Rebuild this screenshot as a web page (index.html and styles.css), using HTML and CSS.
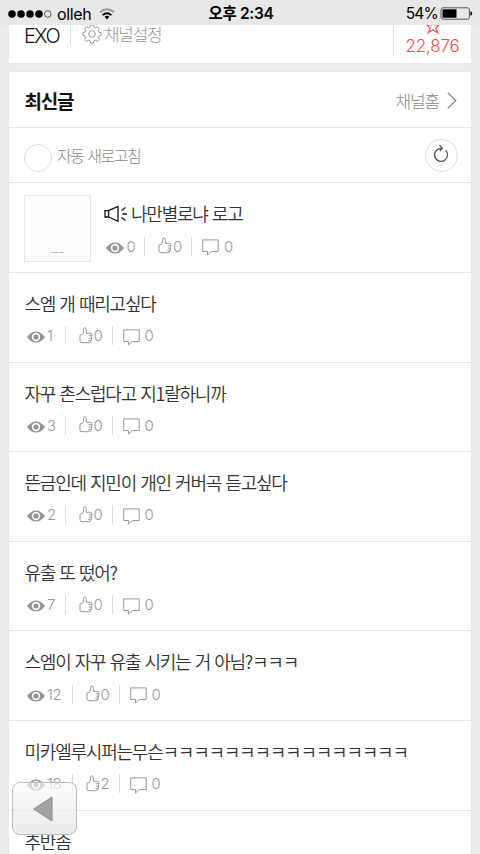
FILE: index.html
```html
<!DOCTYPE html>
<html lang="ko">
<head>
<meta charset="utf-8">
<title>EXO 채널</title>
<link rel="stylesheet" href="styles.css">
</head>
<body>
<svg class="defs" aria-hidden="true">
  <symbol id="eye" viewBox="0 0 18 12"><path fill="#959595" fill-rule="evenodd" d="M0 6Q4 .4 9 .4T18 6Q14 11.600 9 11.600T0 6ZM9 1.800A4.200 4.200 0 1 0 9 10.200 4.200 4.200 0 1 0 9 1.800Z"/><circle cx="9" cy="6" r="2.600" fill="#959595"/></symbol>
  <symbol id="thumb" viewBox="0 0 14 17"><path fill="none" stroke="#999" stroke-linejoin="round" d="M1 8.200L3.500 7.200Q5 5.500 4.600 2.500Q4.400.7 5.600.7Q7.200.7 7.400 3.500L7.200 6.300H11.700Q13.200 6.500 13 8L12.200 13.700Q11.800 15.700 9.800 15.700H3Q1 15.700 1 14ZM9.800 8.700H12.700M9.800 11.200H12.400M9.300 13.700H12"/></symbol>
  <symbol id="bubble" viewBox="0 0 17 17"><path fill="none" stroke="#999" d="M.7.9H16.200V12.500H9.500L5.500 15.900V12.500H.7Z"/></symbol>
</svg>

<header class="status">
  <div class="carrier">
    <svg width="44" height="10" viewBox="0 0 44 10"><circle cx="4" cy="5" r="3.800"/><circle cx="13" cy="5" r="3.800"/><circle cx="22" cy="5" r="3.800"/><circle cx="31" cy="5" r="3.800"/><circle cx="39.800" cy="5" r="3.300" fill="none" stroke="#333" stroke-width=".8"/></svg>
    <span>olleh</span>
    <svg class="wifi" width="16" height="12" viewBox="0 0 16 12" fill="none" stroke-width="1.900"><path stroke="#999" d="M1 4.300Q8-1.800 15 4.300"/><path stroke="#000" d="M3.600 7.100Q8 3.300 12.400 7.100"/><path fill="#000" d="M5.600 8.800Q8 6.900 10.400 8.800L8 11.400Z"/></svg>
  </div>
  <div class="clock">오후 2:34</div>
  <div class="battery"><span>54%</span>
    <svg width="33" height="13" viewBox="0 0 33 13"><rect x="1" y=".8" width="28.400" height="11.400" rx="2" fill="none" stroke="#555"/><rect x="2.500" y="2.300" width="14" height="8.400"/><path d="M30.400 4.200Q32.200 4.500 32.200 6.500T30.400 8.800Z"/></svg>
  </div>
</header>

<section class="card channel">
  <div class="name">EXO</div>
  <div class="settings">
    <svg width="20" height="20" viewBox="0 0 20 20" fill="none" stroke="#999"><path stroke-linejoin="round" d="M8.500 1H11.500L12.200 3.300 13.700 3.900 15.700 2.700 17.500 4.700 16.200 6.700 16.800 8.200 19 8.700V11.300L16.800 12 16.200 13.400 17.400 15.500 15.500 17.400 13.400 16.200 12 16.800 11.400 19H8.600L8 16.800 6.500 16.200 4.500 17.400 2.600 15.500 3.800 13.400 3.200 12 1 11.400V8.600L3.200 8 3.800 6.600 2.600 4.500 4.500 2.600 6.600 3.800 7.900 3.300Z"/><circle cx="10" cy="10" r="3.300"/></svg>
    <span>채널설정</span>
  </div>
  <div class="fans">
    <svg width="14" height="14" viewBox="0 0 14 14" fill="none" stroke="#f34d4d" stroke-width="1.200"><path d="M7 1L8.600 5H13L9.700 8.200 11.700 12.700 7 10 2.300 12.700 4.300 8.200 1 5H5.400Z"/></svg>
    <span>22,876</span>
  </div>
</section>

<main class="card latest">
  <div class="heading">
    <h1>최신글</h1>
    <a class="home">채널홈 <svg width="10" height="17" viewBox="0 0 10 17" fill="none" stroke="#888" stroke-width="1.200"><path d="M.8.800L8.800 8.500.8 16.200"/></svg></a>
  </div>
  <div class="refresh">
    <span class="toggle"></span><span class="label">자동 새로고침</span>
    <span class="reload"><svg width="18" height="20" viewBox="0 0 18 20" fill="none" stroke="#555" stroke-width="1.300"><path d="M13.600 6.300A6.500 6.500 0 1 1 6.500 4.900Q7.800 4.300 9.800 4.300M7.500 1.300L10.300 4.200 7.800 7"/></svg></span>
  </div>
  <article class="post notice">
    <div class="thumb"><span>Candy Pan</span></div>
    <div class="body">
      <h2><svg class="horn" width="24" height="18" viewBox="0 0 24 18" fill="none" stroke="#111" stroke-width="1.300"><path d="M1 5.700H4.600V12H1ZM4.600 5.700L14 1.500V16.300L4.600 12M17.500 5.500L21.500 2.500M18.500 9H23M17.500 12.500L21.500 15.500"/></svg>나만별로냐 로고</h2>
      <div class="meta"><span class="views"><svg class="eye"><use href="#eye"/></svg>0</span><span class="likes"><svg class="like"><use href="#thumb"/></svg>0</span><span class="replies"><svg class="bubble"><use href="#bubble"/></svg>0</span></div>
    </div>
  </article>
  <article class="post"><h2>스엠 개 때리고싶다</h2>
    <div class="meta"><span class="views"><svg class="eye"><use href="#eye"/></svg>1</span><span class="likes"><svg class="like"><use href="#thumb"/></svg>0</span><span class="replies"><svg class="bubble"><use href="#bubble"/></svg>0</span></div></article>
  <article class="post"><h2>자꾸 촌스럽다고 지1랄하니까</h2>
    <div class="meta"><span class="views"><svg class="eye"><use href="#eye"/></svg>3</span><span class="likes"><svg class="like"><use href="#thumb"/></svg>0</span><span class="replies"><svg class="bubble"><use href="#bubble"/></svg>0</span></div></article>
  <article class="post"><h2>뜬금인데 지민이 개인 커버곡 듣고싶다</h2>
    <div class="meta"><span class="views"><svg class="eye"><use href="#eye"/></svg>2</span><span class="likes"><svg class="like"><use href="#thumb"/></svg>0</span><span class="replies"><svg class="bubble"><use href="#bubble"/></svg>0</span></div></article>
  <article class="post"><h2>유출 또 떴어?</h2>
    <div class="meta"><span class="views"><svg class="eye"><use href="#eye"/></svg>7</span><span class="likes"><svg class="like"><use href="#thumb"/></svg>0</span><span class="replies"><svg class="bubble"><use href="#bubble"/></svg>0</span></div></article>
  <article class="post"><h2>스엠이 자꾸 유출 시키는 거 아님?ㅋㅋㅋ</h2>
    <div class="meta wide"><span class="views"><svg class="eye"><use href="#eye"/></svg>12</span><span class="likes"><svg class="like"><use href="#thumb"/></svg>0</span><span class="replies"><svg class="bubble"><use href="#bubble"/></svg>0</span></div></article>
  <article class="post"><h2>미카엘루시퍼는무슨ㅋㅋㅋㅋㅋㅋㅋㅋㅋㅋㅋㅋㅋㅋㅋㅋ</h2>
    <div class="meta wide"><span class="views"><svg class="eye"><use href="#eye"/></svg>18</span><span class="likes"><svg class="like"><use href="#thumb"/></svg>2</span><span class="replies"><svg class="bubble"><use href="#bubble"/></svg>0</span></div></article>
  <article class="post last"><h2>추반좀</h2></article>
</main>

<button class="back" aria-label="뒤로"><svg width="20" height="26" viewBox="0 0 20 26"><path d="M.7 13L19 1V25Z" fill="#a2a5a8" stroke="#888b8e"/></svg></button>
</body>
</html>
```
FILE: styles.css
```css
* { box-sizing: border-box; }
body {
  margin: 0;
  width: 480px;
  height: 854px;
  overflow: hidden;
  position: relative;
  background: #ededed;
  color: #333;
  font-family: "Liberation Sans", "Noto Sans CJK KR", sans-serif;
}
svg { display: block; flex: none; }
h1, h2 { margin: 0; }
.defs { position: absolute; width: 0; height: 0; }

.status {
  display: grid;
  grid-template-columns: 1fr auto 1fr;
  align-items: center;
  height: 25px;
  padding: 1px 7px 0 8px;
  background: #e8e8e8;
  color: #000;
  font: 16px/24px Inter, "Noto Sans CJK KR", sans-serif;
}
.carrier { display: flex; align-items: center; gap: 5px; letter-spacing: -.35px; }
.wifi { margin-left: 3px; }
.clock { padding: 1px 0 0 1px; font-weight: 600; font-size: 15.5px; letter-spacing: -.35px; }
.battery { display: flex; align-items: center; justify-content: flex-end; gap: 2px; font-size: 15.5px; letter-spacing: -.8px; }
.battery span { padding-top: 1px; }

.card { width: 462px; margin-left: 9px; background: #fff; box-shadow: 0 0 2px #ddd; }
.channel { display: flex; height: 38px; clip-path: inset(0 -3px -3px -3px); }
.name {
  width: 62px;
  height: 20px;
  padding-left: 15px;
  border-right: 1px solid #ddd;
  color: #111;
  font: 300 20px/22px Inter, sans-serif;
  letter-spacing: -1.6px;
}
.settings {
  display: flex;
  gap: 2px;
  padding-left: 11px;
  color: #999;
  font: 300 17px/18px "Noto Sans CJK KR", sans-serif;
  letter-spacing: -1.3px;
}
.settings svg { margin-top: -1px; }
.fans {
  display: flex;
  flex-direction: column;
  align-items: center;
  width: 78px;
  height: 31px;
  margin-left: auto;
  border-left: 1px solid #ddd;
  color: #f34d4d;
  font: 300 17px/20px Inter, sans-serif;
  letter-spacing: -.2px;
}
.fans svg { margin-top: -5px; }
.fans span { margin-top: 2px; }

.latest { height: 782px; margin-top: 9px; overflow: hidden; }
.heading {
  display: flex;
  align-items: center;
  justify-content: space-between;
  height: 56px;
  padding: 2px 14px 0 15.5px;
  border-bottom: 1px solid #e5e5e5;
}
h1 { color: #111; font: 700 19px/28px "Noto Sans CJK KR", sans-serif; letter-spacing: -1.2px; }
.home {
  display: flex;
  align-items: center;
  gap: 8px;
  color: #888;
  font: 300 17px/24px "Noto Sans CJK KR", sans-serif;
  letter-spacing: -1.1px;
}
.refresh {
  display: flex;
  align-items: center;
  height: 55px;
  padding: 0 13px 0 15px;
  border-bottom: 1px solid #e5e5e5;
}
.toggle { width: 28px; height: 28px; margin-top: 6px; border: 1px solid #ddd; border-radius: 50%; }
.label {
  margin: 0 auto 0 5px;
  color: #888;
  font: 300 16px/24px "Noto Sans CJK KR", sans-serif;
  letter-spacing: -1.5px;
  word-spacing: .8px;
}
.reload {
  display: grid;
  place-items: center;
  width: 33px;
  height: 33px;
  border: 1px solid #ddd;
  border-radius: 50%;
}
.reload svg { margin: -3px 2px 0 0; }

.post { height: 89.6px; padding: 16px 15.5px 0; border-bottom: 1px solid #e5e5e5; }
.post h2 {
  height: 30px;
  color: #333;
  font: 350 18px/29px "Noto Sans CJK KR", sans-serif;
  letter-spacing: -1.23px;
  word-spacing: .4px;
  white-space: nowrap;
}
.post.last { height: 46px; border-bottom: 0; }
.notice { display: flex; height: 90px; padding-top: 12px; }
.thumb {
  display: flex;
  align-items: flex-end;
  justify-content: center;
  width: 67px;
  height: 67px;
  margin-left: -.5px;
  padding-bottom: 6px;
  border: 1px solid #e8e8e8;
  background: #fdfdfd;
}
.thumb span { color: #444; font: 2.500px/4px "Liberation Sans", sans-serif; }
.body { margin: 4px 0 0 13px; }
.notice h2 { display: flex; align-items: center; gap: 3px; height: 29px; line-height: 27px; }
.meta {
  display: flex;
  align-items: center;
  height: 19px;
  margin-top: 7.300px;
  color: #999;
  font: 300 15px/19px Inter, sans-serif;
}
.notice .meta { margin-top: 8.600px; }
.meta span { display: flex; align-items: center; height: 19px; }
.views { width: 41px; padding-left: 2px; gap: 2.500px; border-right: 1px solid #ddd; letter-spacing: -.4px; }
.wide .views { width: 48px; }
.likes { width: 47px; padding-left: 13px; gap: 1px; border-right: 1px solid #ddd; }
.replies { padding-left: 10px; gap: 5px; }
.eye { width: 18px; height: 12px; margin-top: 3px; }
.like { width: 14px; height: 17px; margin-top: -1px; }
.bubble { width: 17px; height: 17px; margin-top: 3px; }

.back {
  position: absolute;
  left: 12px;
  top: 782px;
  display: grid;
  place-items: center;
  width: 65px;
  height: 53px;
  padding: 0 3px 0 0;
  border: 1.500px solid #bbb;
  border-radius: 8px;
  background: linear-gradient(rgba(250, 250, 250, .65), rgba(230, 230, 230, .78));
}
```
